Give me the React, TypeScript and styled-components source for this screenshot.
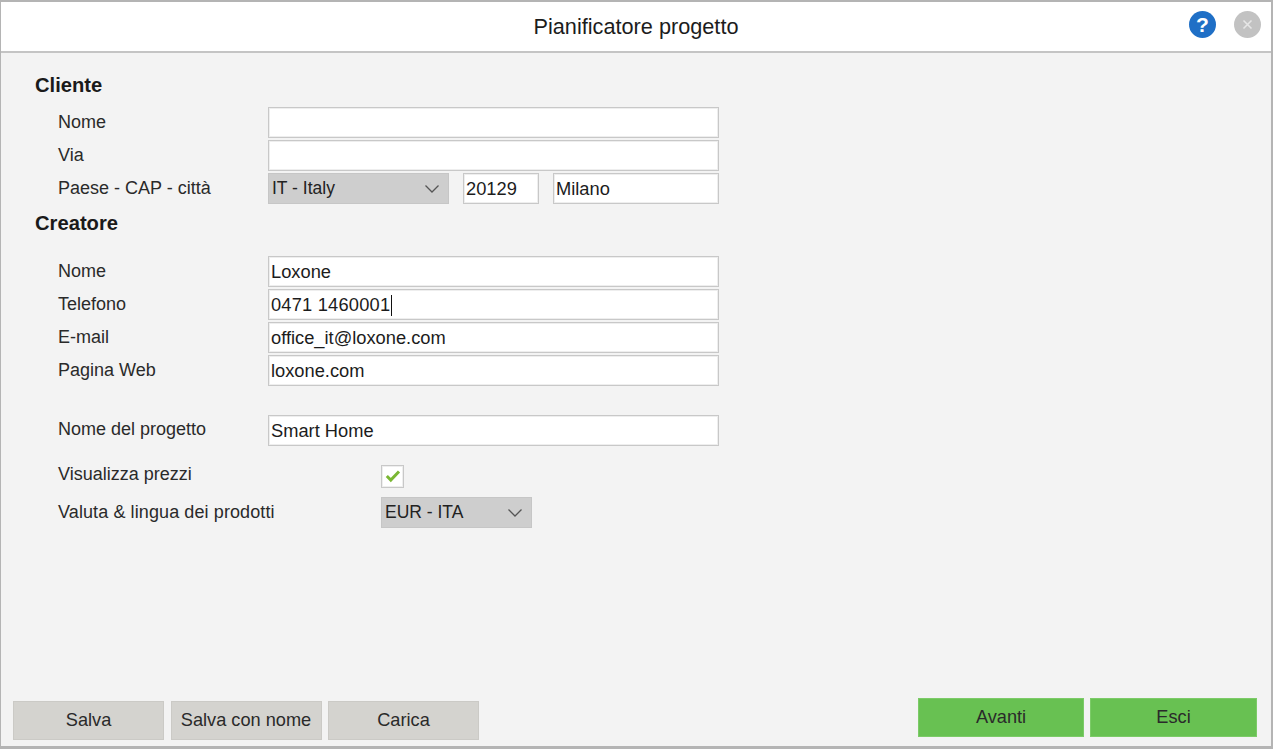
import styled, { createGlobalStyle } from 'styled-components'

const GlobalStyle = createGlobalStyle`
	html, body {
		margin: 0;
		background: #f3f3f3;
	}
	* {
		box-sizing: border-box;
	}
`

const clienteFields = [
	{ label: 'Nome', value: '' },
	{ label: 'Via', value: '' },
]

const creatoreFields = [
	{ label: 'Nome', value: 'Loxone' },
	{ label: 'Telefono', value: '0471 1460001', focused: true },
	{ label: 'E-mail', value: 'office_it@loxone.com' },
	{ label: 'Pagina Web', value: 'loxone.com' },
]

const Chevron = () => (
	<svg width="16" height="10" viewBox="0 0 16 10" fill="none">
		<path d="M1.5 1.5 8 8l6.5-6.5" stroke="#555" strokeWidth="1.3" />
	</svg>
)

const App = () => {
	return (
		<Window>
			<GlobalStyle />
			<Header>
				<span />
				<Title>Pianificatore progetto</Title>
				<HeaderIcons>
					<HelpIcon>?</HelpIcon>
					<CloseIcon>
						<svg width="11" height="11" viewBox="0 0 11 11" fill="none">
							<path d="M1.5 1.5l8 8M9.5 1.5l-8 8" stroke="#e6e6e6" strokeWidth="1.6" />
						</svg>
					</CloseIcon>
				</HeaderIcons>
			</Header>

			<Content>
				<SectionTitle>Cliente</SectionTitle>
				<Rows>
					{clienteFields.map((f) => (
						<Row key={f.label}>
							<Label>{f.label}</Label>
							<Field />
						</Row>
					))}
					<Row>
						<Label>Paese - CAP - città</Label>
						<AddressGroup>
							<Select $width={181}>
								IT - Italy
								<Chevron />
							</Select>
							<Field $width={76}>20129</Field>
							<Field>Milano</Field>
						</AddressGroup>
					</Row>
				</Rows>

				<CreatorTitle>Creatore</CreatorTitle>
				<Rows>
					{creatoreFields.map((f) => (
						<Row key={f.label}>
							<Label>{f.label}</Label>
							<Field $focused={f.focused}>
								{f.value}
								{f.focused && <Caret />}
							</Field>
						</Row>
					))}
				</Rows>

				<ProjectRow>
					<Label>Nome del progetto</Label>
					<Field>Smart Home</Field>
				</ProjectRow>

				<OptionRow>
					<Label>Visualizza prezzi</Label>
					<Checkbox>
						<svg width="16" height="14" viewBox="0 0 16 14" fill="none">
							<path d="M1.8 7 5.8 11 14 2.5" stroke="#7ab733" strokeWidth="3" />
						</svg>
					</Checkbox>
				</OptionRow>
				<CurrencyRow>
					<Label>Valuta &amp; lingua dei prodotti</Label>
					<Select $width={151}>
						EUR - ITA
						<Chevron />
					</Select>
				</CurrencyRow>
			</Content>

			<Footer>
				<FooterLeft>
					<GreyButton>Salva</GreyButton>
					<GreyButton>Salva con nome</GreyButton>
					<GreyButton>Carica</GreyButton>
				</FooterLeft>
				<FooterRight>
					<GreenButton>Avanti</GreenButton>
					<GreenButton>Esci</GreenButton>
				</FooterRight>
			</Footer>
		</Window>
	)
}

export default App

const Window = styled.div`
	width: 1273px;
	height: 749px;
	display: flex;
	flex-direction: column;
	background: #f3f3f3;
	border: solid #b4b4b4;
	border-width: 2px 2px 3px 1px;
	font-family: 'Liberation Sans', Arial, sans-serif;
	font-size: 18px;
	color: #222;
	overflow: hidden;
`

const Header = styled.div`
	height: 51px;
	flex-shrink: 0;
	display: grid;
	grid-template-columns: 1fr auto 1fr;
	align-items: center;
	background: #fff;
	border-bottom: 2px solid #c4c4c4;
`

const Title = styled.div`
	font-size: 21.7px;
	color: #1c1c1c;
`

const HeaderIcons = styled.div`
	display: flex;
	justify-self: end;
	gap: 18px;
	padding-right: 10px;
	margin-top: -4px;
`

const RoundIcon = styled.div`
	width: 27px;
	height: 27px;
	border-radius: 50%;
	display: flex;
	align-items: center;
	justify-content: center;
`

const HelpIcon = styled(RoundIcon)`
	background: #1f6fc6;
	color: #fff;
	font-size: 21px;
	font-weight: 700;
`

const CloseIcon = styled(RoundIcon)`
	background: #c2c2c2;
`

const Content = styled.div`
	flex: 1;
	padding: 20px 0 0 34px;
`

const SectionTitle = styled.div`
	height: 24px;
	line-height: 24px;
	margin-bottom: 10px;
	font-size: 20.2px;
	font-weight: 700;
	color: #1a1a1a;
`

const CreatorTitle = styled(SectionTitle)`
	margin-top: 7px;
	margin-bottom: 21px;
`

const Rows = styled.div`
	display: flex;
	flex-direction: column;
	gap: 2px;
`

const Label = styled.div`
	line-height: 30px;
	color: #2a2a2a;
	white-space: nowrap;
`

const Row = styled.div`
	display: grid;
	grid-template-columns: 210px 451px;
	height: 31px;
	margin-left: 23px;
`

const ProjectRow = styled(Row)`
	margin-top: 29px;

	${Label} {
		line-height: 28px;
	}
`

const OptionRow = styled.div`
	display: grid;
	grid-template-columns: 323px auto;
	height: 23px;
	margin: 17px 0 0 23px;
	align-items: center;

	${Label} {
		margin-top: -4px;
	}
`

const CurrencyRow = styled(OptionRow)`
	height: 31px;
	margin-top: 11px;

	${Label} {
		margin-top: -2px;
		letter-spacing: 0.1px;
	}
`

const Field = styled.div<{ $width?: number; $focused?: boolean }>`
	display: flex;
	align-items: center;
	height: 31px;
	flex: ${(p) => (p.$width ? `0 0 ${p.$width}px` : 1)};
	padding: 1px 2px 0;
	background: #fff;
	border: 1px solid #c8c8c8;
	box-shadow: inset 0 0 0 1px #eee;
	font-size: 18.3px;
	letter-spacing: ${(p) => (p.$focused ? '0.2px' : 'normal')};
	color: #1c1c1c;
	white-space: nowrap;
`

const Caret = styled.span`
	width: 1px;
	height: 21px;
	margin-left: 1px;
	background: #111;
`

const AddressGroup = styled.div`
	display: flex;
	gap: 14px;
`

const Select = styled.div<{ $width: number }>`
	display: flex;
	align-items: center;
	justify-content: space-between;
	flex: 0 0 ${(p) => p.$width}px;
	width: ${(p) => p.$width}px;
	height: 31px;
	padding: 0 8px 0 3px;
	background: #cecece;
	border: 1px solid #c6c6c6;
	font-size: 17.5px;
	color: #222;
`

const Footer = styled.div`
	display: flex;
	justify-content: space-between;
	padding: 0 14px 6px 12px;
`

const FooterLeft = styled.div`
	display: flex;
	gap: 6.5px;
`

const FooterRight = styled.div`
	display: flex;
	gap: 6px;
	margin-top: -3px;
	margin-bottom: 3px;
`

const BaseButton = styled.button`
	height: 39px;
	padding: 0;
	font-family: inherit;
	font-size: 18.2px;
	color: #2a2a2a;
	border-radius: 0;
`

const GreyButton = styled(BaseButton)`
	width: 151px;
	background: #d4d3cf;
	border: 1px solid #cbcac6;
`

const GreenButton = styled(BaseButton)`
	width: 167px;
	background: #68c152;
	border: 1px solid #7ccb68;

	&:first-child {
		width: 166px;
	}
`

const Checkbox = styled.div`
	width: 23px;
	height: 23px;
	display: flex;
	align-items: center;
	justify-content: center;
	background: #fff;
	border: 1px solid #c8c8c8;
	box-shadow: inset 0 0 0 1px #eee;
`
